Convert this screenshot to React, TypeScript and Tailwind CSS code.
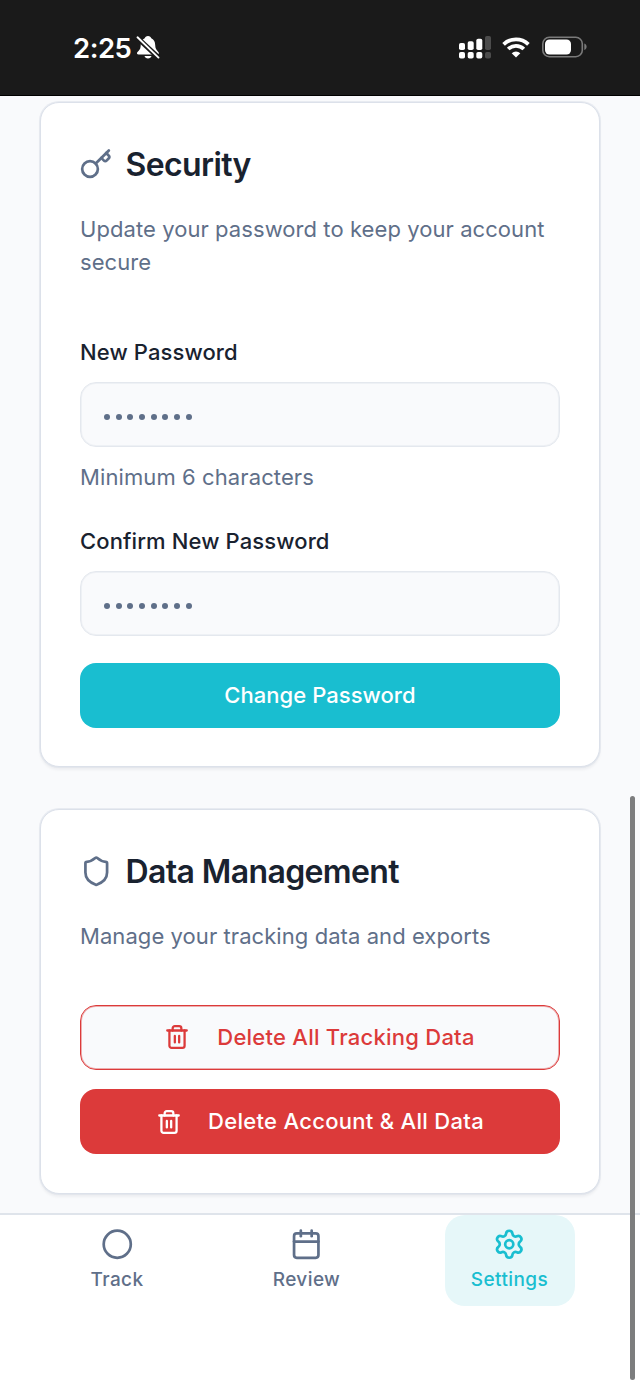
import React from 'react';
import { Calendar, Circle, Settings, Shield, Trash2 } from 'lucide-react';

type IconComponent = React.ComponentType<{ className?: string; strokeWidth?: number }>;

interface SectionCardProps {
  icon: IconComponent;
  title: string;
  description: string;
  children: React.ReactNode;
  className: string;
}

interface NavItem {
  label: string;
  icon: IconComponent;
  active?: boolean;
  className: string;
}

const navItems: NavItem[] = [
  { label: 'Track', icon: Circle, className: 'w-[104px] ml-[65px]' },
  { label: 'Review', icon: Calendar, className: 'w-[120px] ml-[77.5px]' },
  { label: 'Settings', icon: Settings, active: true, className: 'w-[130px] ml-[78.5px] pr-px' },
];

/**
 * Key icon with a wide ring and a short bit
 */
const KeyIcon: IconComponent = ({ className, strokeWidth = 2 }) => (
  <svg
    className={className}
    viewBox="0 0 24 24"
    fill="none"
    stroke="currentColor"
    strokeWidth={strokeWidth}
    strokeLinecap="round"
    strokeLinejoin="round"
  >
    <circle cx="7.4" cy="15.5" r="5.8" />
    <path d="M21.300 1.800 11.600 11.500" />
    <path d="m15.700 7.300 2 2a1.300 1.300 0 0 0 1.900 0l1.700-1.700a1.300 1.300 0 0 0 0-1.900l-2-2" />
  </svg>
);

/**
 * Phone status bar: clock, muted bell, signal, wifi and battery
 */
const StatusBar: React.FC = () => (
  <header className="flex h-24 items-start justify-between border-b border-black bg-[#1a1a1a] pl-[73px] pr-[53px] pt-[31px] text-white">
    <div className="flex h-8 items-center gap-1">
      <span className="w-[59px] whitespace-nowrap pt-px text-[27.5px] font-semibold leading-8 tracking-[-0.5px]">
        2:25
      </span>
      <svg className="h-6 w-6" viewBox="0 0 24 24" fill="none">
        <path
          fill="currentColor"
          d="M12 1c-1.8 0-3 1-3.3 2.300C5.800 4.500 4.800 7.100 4.700 10c-.1 3.700-.9 4.600-2.500 6.300-1 1.100-1.400 1.600-1.100 2.400.2.600.7.800 1.500.8h18.600c.9 0 1.400-.3 1.600-.9.2-.8-.2-1.300-1.100-2.300-1.500-1.700-2.400-2.700-2.500-6.300-.1-2.900-1.100-5.500-3.900-6.700C15 2 13.800 1 12 1zM8.500 21h7c-.4 1.500-1.700 2.500-3.500 2.500S8.900 22.500 8.500 21z"
        />
        <path d="M1 2.500 23 23" stroke="#1a1a1a" strokeWidth="5" />
        <path d="M1.500 2.300 22.500 22.600" stroke="currentColor" strokeWidth="1.9" strokeLinecap="round" />
      </svg>
    </div>
    <div className="flex h-8 items-center">
      <svg className="h-6 w-8" viewBox="0 0 32 24" fill="currentColor">
        <rect x="0" y="8" width="6" height="7" rx="1.8" />
        <rect x="8.7" y="6.3" width="6" height="8.7" rx="1.8" />
        <rect x="17.3" y="3.8" width="6" height="11.2" rx="1.8" />
        <rect x="26" y="1" width="6" height="14" rx="1.8" opacity="0.22" />
        <rect x="0" y="17" width="6" height="6.5" rx="1.8" />
        <rect x="8.7" y="17" width="6" height="6.5" rx="1.8" />
        <rect x="17.3" y="17" width="6" height="6.5" rx="1.8" />
        <rect x="26" y="17" width="6" height="6.5" rx="1.8" opacity="0.22" />
      </svg>
      <svg className="ml-[11px] h-[21px] w-7" viewBox="0 0 28 21" fill="none" stroke="currentColor" strokeWidth="3.8">
        <path d="M1.600 7.300a18 18 0 0 1 24.800 0" />
        <path d="M6.200 12a11.300 11.300 0 0 1 15.600 0" />
        <path d="M9.700 16.200a6.300 6.300 0 0 1 8.600 0L14 20.500z" fill="currentColor" stroke="none" />
      </svg>
      <svg className="ml-3 h-[22px] w-[45px]" viewBox="0 0 45 22" fill="none">
        <rect x="0.8" y="1.3" width="39.5" height="19.4" rx="6.5" stroke="#7a7a7a" strokeWidth="1.6" />
        <rect x="3" y="3.5" width="26" height="15" rx="4.5" fill="currentColor" />
        <path d="M42.300 7.500c1.500.5 2.300 1.700 2.300 3.300s-.8 2.800-2.300 3.300z" fill="#7a7a7a" />
      </svg>
    </div>
  </header>
);

/**
 * Rounded card with icon, heading and description
 */
const SectionCard: React.FC<SectionCardProps> = ({ icon: Icon, title, description, children, className }) => (
  <section
    className={`rounded-[19px] border border-[#dce1ea] bg-white px-[39px] pt-10 shadow-[0_0_0_1px_rgba(220,225,234,0.6),0_3px_3px_rgba(15,23,42,0.05)] ${className}`}
  >
    <div className="flex h-11 items-center gap-[13px]">
      <Icon className="mb-0.5 size-[32.5px] text-[#5f6f89]" strokeWidth={2} />
      <h2 className="whitespace-nowrap text-[32px] font-semibold leading-10 tracking-[-0.62px] text-[#19222f]">
        {title}
      </h2>
    </div>
    <p className="mt-[26px] text-[22px] leading-[33px] tracking-[0.07px] text-[#5f6f89]">{description}</p>
    {children}
  </section>
);

/**
 * Labelled password input
 */
const PasswordField: React.FC<{ label: string; hint?: string }> = ({ label, hint }) => (
  <div>
    <label className="block text-[22px] font-medium leading-7 tracking-[0.12px] text-[#19222f]">{label}</label>
    <div className="mt-4 flex h-[65px] items-center gap-[5.7px] rounded-2xl border border-[#e4e8ee] bg-[#f9fafc] px-[23px] pt-1 shadow-[inset_0_0_0_1px_rgba(228,232,238,0.5)]">
      {Array.from({ length: 8 }, (_, i) => (
        <span key={i} className="size-[6px] rounded-full bg-[#5f6f89]" />
      ))}
    </div>
    {hint && <p className="mt-4 text-[22px] leading-7 tracking-[0.1px] text-[#5f6f89]">{hint}</p>}
  </div>
);

/**
 * Bottom tab bar
 */
const BottomNav: React.FC = () => (
  <nav className="flex h-[174px] items-start border-t-2 border-[#dfe4eb] bg-white">
    {navItems.map(({ label, icon: Icon, active, className }) => (
      <button
        key={label}
        className={`flex h-[91px] flex-col items-center rounded-[20px] pt-[13px] ${className} ${
          active ? 'bg-[#e6f7f9] text-[#19bed0]' : 'text-[#5f6f89]'
        }`}
      >
        <Icon className="size-[32.5px]" strokeWidth={2} />
        <span className="mt-[7px] text-[19px] font-medium leading-6 tracking-[0.4px]">{label}</span>
      </button>
    ))}
  </nav>
);

export default function App() {
  return (
    <div className="relative flex h-[1387px] w-[640px] flex-col overflow-hidden bg-[#f9fafc] font-['Inter',sans-serif]">
      <StatusBar />
      <main className="flex flex-1 flex-col gap-[42px] px-10 pt-1.5">
        <SectionCard
          icon={KeyIcon}
          title="Security"
          description="Update your password to keep your account secure"
          className="h-[665px]"
        >
          <div className="mt-[59px] flex flex-col gap-9">
            <PasswordField label="New Password" hint="Minimum 6 characters" />
            <PasswordField label="Confirm New Password" />
          </div>
          <button className="mt-[27px] h-[65px] w-full rounded-2xl bg-[#19bed0] text-[22px] font-medium tracking-[0.05px] text-white">
            Change Password
          </button>
        </SectionCard>

        <SectionCard
          icon={Shield}
          title="Data Management"
          description="Manage your tracking data and exports"
          className="h-[385px]"
        >
          <div className="mt-[52px] flex flex-col gap-[19px]">
            <button className="flex h-[65px] items-center justify-center gap-[27px] rounded-2xl border border-[#dc3a3a] bg-[#f9fafc] pr-px text-[22px] font-medium tracking-[0.24px] text-[#dc3a3a] shadow-[inset_0_0_0_1px_rgba(220,58,58,0.4)]">
              <Trash2 className="mb-0.5 size-[26px]" strokeWidth={2.1} />
              Delete All Tracking Data
            </button>
            <button className="flex h-[65px] items-center justify-center gap-[26px] rounded-2xl bg-[#dc3a3a] text-[22px] font-medium tracking-[0.3px] text-white">
              <Trash2 className="size-[26px]" strokeWidth={2.1} />
              Delete Account &amp; All Data
            </button>
          </div>
        </SectionCard>
      </main>
      <BottomNav />
      {/* overlay scrollbar */}
      <div className="absolute right-[5px] top-[796px] h-[584px] w-[5px] rounded-full bg-[#7c7d7e]" />
    </div>
  );
}
